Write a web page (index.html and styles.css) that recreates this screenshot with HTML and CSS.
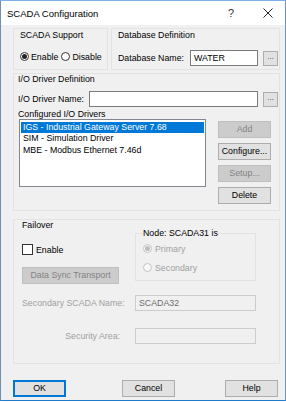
FILE: index.html
```html
<!DOCTYPE html>
<html lang="en">
<head>
    <meta charset="UTF-8">
    <title>SCADA Configuration</title>
    <link rel="stylesheet" href="styles.css">
</head>
<body>
    <div class="window">
        <div class="titlebar">
            <span class="title">SCADA Configuration</span>
            <span class="help-icon">?</span>
            <svg class="close-icon" width="10" height="10" viewBox="0 0 10 10">
                <path d="M0.5 0.5 L9.5 9.5 M9.5 0.5 L0.5 9.5" stroke="#222" stroke-width="1" fill="none"/>
            </svg>
        </div>

        <div class="content">
            <div class="top-row">
                <div class="group support">
                    <div class="legend">SCADA Support</div>
                    <div class="radios">
                        <span class="radio checked"></span><span class="radio-label">Enable</span>
                        <span class="radio"></span><span class="radio-label">Disable</span>
                    </div>
                </div>
                <div class="group database">
                    <div class="legend">Database Definition</div>
                    <div class="field-row">
                        <span class="db-label">Database Name:</span>
                        <span class="textbox db-input">WATER</span>
                        <span class="dots-btn">...</span>
                    </div>
                </div>
            </div>

            <div class="group drivers">
                <div class="legend">I/O Driver Definition</div>
                <div class="field-row name-row">
                    <span class="driver-label">I/O Driver Name:</span>
                    <span class="textbox driver-input"></span>
                    <span class="dots-btn">...</span>
                </div>
                <div class="list-caption">Configured I/O Drivers</div>
                <div class="list-row">
                    <div class="listbox">
                        <div class="item selected">IGS - Industrial Gateway Server 7.68</div>
                        <div class="item">SIM - Simulation Driver</div>
                        <div class="item">MBE - Modbus Ethernet 7.46d</div>
                    </div>
                    <div class="side-buttons">
                        <span class="btn disabled">Add</span>
                        <span class="btn">Configure...</span>
                        <span class="btn disabled">Setup...</span>
                        <span class="btn">Delete</span>
                    </div>
                </div>
            </div>

            <div class="group failover">
                <div class="legend">Failover</div>
                <div class="fo-top">
                    <div class="fo-left">
                        <div class="check-row">
                            <span class="checkbox"></span><span>Enable</span>
                        </div>
                        <span class="btn disabled sync-btn">Data Sync Transport</span>
                    </div>
                    <fieldset class="node-group">
                        <legend>Node: SCADA31 is</legend>
                        <div class="node-radio">
                            <span class="radio checked disabled"></span><span>Primary</span>
                        </div>
                        <div class="node-radio second">
                            <span class="radio disabled"></span><span>Secondary</span>
                        </div>
                    </fieldset>
                </div>
                <div class="fo-row">
                    <span class="fo-label">Secondary SCADA Name:</span>
                    <span class="textbox off">SCADA32</span>
                </div>
                <div class="fo-row security">
                    <span class="fo-label right">Security Area:</span>
                    <span class="textbox off"></span>
                </div>
            </div>

            <div class="dialog-buttons">
                <span class="btn default ok">OK</span>
                <span class="btn cancel">Cancel</span>
                <span class="btn help">Help</span>
            </div>
        </div>
    </div>
</body>
</html>
```

FILE: styles.css
```css
* { box-sizing: border-box; }
body {
    margin: 0;
    background: #ffffff;
    font-family: 'Liberation Sans', Arial, sans-serif;
    font-size: 8.8px;
    color: #000;
}
.window {
    width: 286px;
    height: 401px;
    border: 1px solid #6f8fb5;
    border-top-color: #7fb0e4;
    border-bottom-color: #1f7ad3;
    background: #f0f0f0;
    display: flex;
    flex-direction: column;
}
.titlebar {
    height: 24px;
    background: #fff;
    display: flex;
    align-items: center;
    padding-left: 6px;
    flex-shrink: 0;
}
.title {
    font-size: 9.5px;
    flex: 1;
}
.help-icon {
    font-size: 11px;
    color: #333;
    margin-right: 29px;
}
.close-icon { margin-right: 12px; }

.content {
    padding: 3px 5px 0 12px;
}
.group {
    border: 1px solid #e3e3e3;
}
.legend {
    line-height: 11px;
}
.top-row {
    display: flex;
    gap: 3px;
    height: 42px;
}
.support {
    width: 95px;
    padding: 1px 0 0 6px;
}
.radios {
    display: flex;
    align-items: center;
    margin-top: 10px;
    height: 11px;
}
.radio {
    width: 9px;
    height: 9px;
    border: 1px solid #333;
    border-radius: 50%;
    background: #fff;
    display: inline-flex;
    align-items: center;
    justify-content: center;
    flex-shrink: 0;
}
.radio.checked::after {
    content: "";
    width: 5px;
    height: 5px;
    border-radius: 50%;
    background: #222;
}
.radio.disabled {
    border-color: #c4c4c4;
    background: #f7f7f7;
}
.radio.disabled.checked::after { background: #bcbcbc; }
.radio-label {
    margin: 0 3px 0 2px;
}
.database {
    flex: 1;
    padding: 1px 0 0 6px;
}
.field-row {
    display: flex;
    align-items: center;
}
.database .field-row { margin-top: 9px; }
.db-label { width: 72px; }
.textbox {
    display: block;
    height: 16px;
    line-height: 14px;
    background: #fff;
    border: 1px solid #7a7a7a;
    padding-left: 3px;
}
.db-input { width: 68px; }
.dots-btn {
    width: 15px;
    height: 15px;
    margin-left: 5px;
    background: #e1e1e1;
    border: 1px solid #adadad;
    color: #444;
    text-align: center;
    line-height: 10px;
    font-size: 8px;
}

.drivers {
    margin-top: 3px;
    height: 138px;
    padding: 0 0 0 4px;
}
.name-row { margin-top: 6px; }
.driver-label { width: 71px; }
.driver-input { width: 169px; }
.list-caption {
    line-height: 10px;
    margin-top: 2px;
}
.list-row {
    display: flex;
    margin-left: 1px;
}
.listbox {
    width: 187px;
    height: 68px;
    background: #fff;
    border: 1px solid #828790;
    padding: 2px 1px;
}
.item {
    line-height: 11.4px;
    padding-left: 2px;
    white-space: nowrap;
}
.item.selected {
    background: #0078d7;
    color: #fff;
}
.side-buttons {
    display: flex;
    flex-direction: column;
    gap: 5px;
    margin: 2px 0 0 12px;
}
.btn {
    display: block;
    width: 53px;
    height: 17px;
    line-height: 15px;
    text-align: center;
    background: #e1e1e1;
    border: 1px solid #adadad;
    white-space: nowrap;
}
.btn.disabled {
    background: #cccccc;
    border-color: #bfbfbf;
    color: #838383;
}

.failover {
    margin-top: 8px;
    height: 145px;
    padding: 0 0 0 8px;
}
.fo-top {
    display: flex;
    margin-top: -3px;
}
.fo-left {
    width: 113px;
    padding-top: 16px;
}
.check-row {
    display: flex;
    align-items: center;
    gap: 3px;
    height: 11px;
}
.checkbox {
    width: 11px;
    height: 11px;
    border: 1px solid #333;
    background: #fff;
}
.sync-btn {
    width: 97px;
    margin-top: 12px;
}
.node-group {
    width: 121px;
    height: 53px;
    margin: 0;
    padding: 4px 0 0 7px;
    border: 1px solid #e3e3e3;
}
.node-group legend {
    padding: 0;
    margin-left: 0;
    line-height: 11px;
}
.node-radio {
    display: flex;
    align-items: center;
    gap: 3px;
    color: #a0a0a0;
    height: 11px;
}
.node-radio.second { margin-top: 8px; }
.fo-row {
    display: flex;
    align-items: center;
    margin-top: 11px;
}
.fo-row.security { margin-top: 17px; }
.fo-label {
    width: 113px;
    color: #a0a0a0;
}
.fo-label.right {
    text-align: right;
    padding-right: 15px;
}
.textbox.off {
    width: 121px;
    background: #f0f0f0;
    border-color: #cccccc;
    color: #6d6d6d;
}

.dialog-buttons {
    display: flex;
    margin-top: 16px;
}
.btn.default {
    border-color: #0078d7;
    box-shadow: inset 0 0 0 1px #0078d7;
}
.btn.cancel { margin-left: 56px; }
.btn.help { margin-left: 50px; }
```
